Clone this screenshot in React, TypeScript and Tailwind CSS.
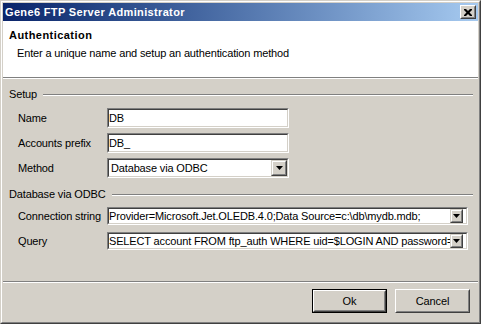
import React from "react";

function Arrow() {
  return (
    <svg width="7" height="4" viewBox="0 0 7 4" className="block">
      <polygon points="0,0 7,0 3.5,4" fill="#000" />
    </svg>
  );
}

function DropButton({ w, h }: { w: string; h: string }) {
  return (
    <div className={`${w} ${h} shrink-0 border border-t-[#d4d0c8] border-l-[#d4d0c8] border-r-[#404040] border-b-[#404040]`}>
      <div className="h-full w-full border border-t-white border-l-white border-r-[#808080] border-b-[#808080] bg-[#d4d0c8] flex items-center justify-center">
        <Arrow />
      </div>
    </div>
  );
}

function Sunken({ className, children }: { className: string; children: React.ReactNode }) {
  return (
    <div className={`${className} border border-t-[#808080] border-l-[#808080] border-r-white border-b-white`}>
      <div className="h-full w-full border border-t-[#404040] border-l-[#404040] border-r-[#d4d0c8] border-b-[#d4d0c8] bg-white flex items-center overflow-hidden">
        {children}
      </div>
    </div>
  );
}

function GroupLabel({ text }: { text: string }) {
  return (
    <div className="h-[13px] flex items-center gap-[6px]">
      <span className="whitespace-nowrap">{text}</span>
      <div className="flex-1 h-[2px] border-t border-t-[#808080] border-b border-b-white" />
    </div>
  );
}

function Row({ label, children, h }: { label: string; children: React.ReactNode; h: string }) {
  return (
    <div className={`flex items-center ${h}`}>
      <div className="w-[89px] whitespace-nowrap">{label}</div>
      {children}
    </div>
  );
}

function Btn({ label, isDefault }: { label: string; isDefault?: boolean }) {
  const inner = (
    <div className="h-full w-full border border-t-white border-l-white border-r-[#404040] border-b-[#404040]">
      <div className="h-full w-full border border-t-[#d4d0c8] border-l-[#d4d0c8] border-r-[#808080] border-b-[#808080] flex items-center justify-center">
        {label}
      </div>
    </div>
  );
  return isDefault ? (
    <div className="w-[75px] h-[24px] border border-black">{inner}</div>
  ) : (
    <div className="w-[75px] h-[24px]">{inner}</div>
  );
}

export default function App() {
  return (
    <div className="w-[481px] h-[324px] font-['Liberation_Sans',Arial,sans-serif] text-[11px] leading-[13px] tracking-[-0.15px] text-black">
      <div className="h-full border border-t-[#d4d0c8] border-l-[#d4d0c8] border-r-[#404040] border-b-[#404040]">
        <div className="h-full border border-t-white border-l-white border-r-[#808080] border-b-[#808080] bg-[#d4d0c8] p-px flex flex-col">
          {/* Title bar */}
          <div className="h-[18px] shrink-0 bg-linear-to-r from-[#0a246a] to-[#a6caf0] flex items-center pl-[2px] pr-[2px]">
            <span className="text-white font-bold tracking-[0.35px] whitespace-nowrap">Gene6 FTP Server Administrator</span>
            <div className="ml-auto w-[16px] h-[14px] border border-t-white border-l-white border-r-[#404040] border-b-[#404040]">
              <div className="h-full w-full border border-t-[#d4d0c8] border-l-[#d4d0c8] border-r-[#808080] border-b-[#808080] bg-[#d4d0c8] flex items-center justify-center">
                <svg width="8" height="7" viewBox="0 0 8 7" className="block">
                  <path d="M0 0h2l2 2 2-2h2v1l-2.5 2.5L8 6v1H6L4 5 2 7H0V6l2.5-2.5L0 1z" fill="#000" />
                </svg>
              </div>
            </div>
          </div>
          {/* Header */}
          <div className="h-[56px] shrink-0 bg-white pl-[6px] pt-[8px]">
            <div className="font-bold tracking-[0.45px]">Authentication</div>
            <div className="mt-[5px] pl-[8px]">Enter a unique name and setup an authentication method</div>
          </div>
          <div className="h-px shrink-0 bg-[#808080]" />
          <div className="h-px shrink-0 bg-white" />
          {/* Body */}
          <div className="h-[202px] shrink-0 pl-[6px] pr-[5px] pt-[9px] flex flex-col">
            <GroupLabel text="Setup" />
            <div className="pl-[9px] mt-[7px] flex flex-col gap-[5px]">
              <Row label="Name" h="h-[20px]">
                <Sunken className="w-[182px] h-[20px]">
                  <span>DB</span>
                </Sunken>
              </Row>
              <Row label="Accounts prefix" h="h-[20px]">
                <Sunken className="w-[182px] h-[20px]">
                  <span>DB_</span>
                </Sunken>
              </Row>
              <Row label="Method" h="h-[20px]">
                <Sunken className="w-[182px] h-[20px]">
                  <span className="pl-[2px] flex-1 whitespace-nowrap">Database via ODBC</span>
                  <DropButton w="w-[16px]" h="h-[16px]" />
                </Sunken>
              </Row>
            </div>
            <div className="mt-[10px]">
              <GroupLabel text="Database via ODBC" />
            </div>
            <div className="pl-[9px] mt-[6px] flex flex-col gap-[7px]">
              <Row label="Connection string" h="h-[18px]">
                <Sunken className="w-[361px] h-[18px]">
                  <span className="flex-1 min-w-0 overflow-hidden whitespace-nowrap">Provider=Microsoft.Jet.OLEDB.4.0;Data Source=c:\db\mydb.mdb;</span>
                  <DropButton w="w-[13px]" h="h-[14px]" />
                  <div className="w-[3px] shrink-0" />
                </Sunken>
              </Row>
              <Row label="Query" h="h-[18px]">
                <Sunken className="w-[361px] h-[18px]">
                  <span className="flex-1 min-w-0 overflow-hidden whitespace-nowrap">SELECT account FROM ftp_auth WHERE uid=$LOGIN AND password=$PASSWORD</span>
                  <DropButton w="w-[13px]" h="h-[14px]" />
                  <div className="w-[3px] shrink-0" />
                </Sunken>
              </Row>
            </div>
          </div>
          <div className="h-px shrink-0 bg-[#808080]" />
          <div className="h-px shrink-0 bg-white" />
          {/* Footer */}
          <div className="flex-1 flex justify-end items-start pt-[6px] pr-[8px] gap-[8px]">
            <Btn label="Ok" isDefault />
            <Btn label="Cancel" />
          </div>
        </div>
      </div>
    </div>
  );
}
